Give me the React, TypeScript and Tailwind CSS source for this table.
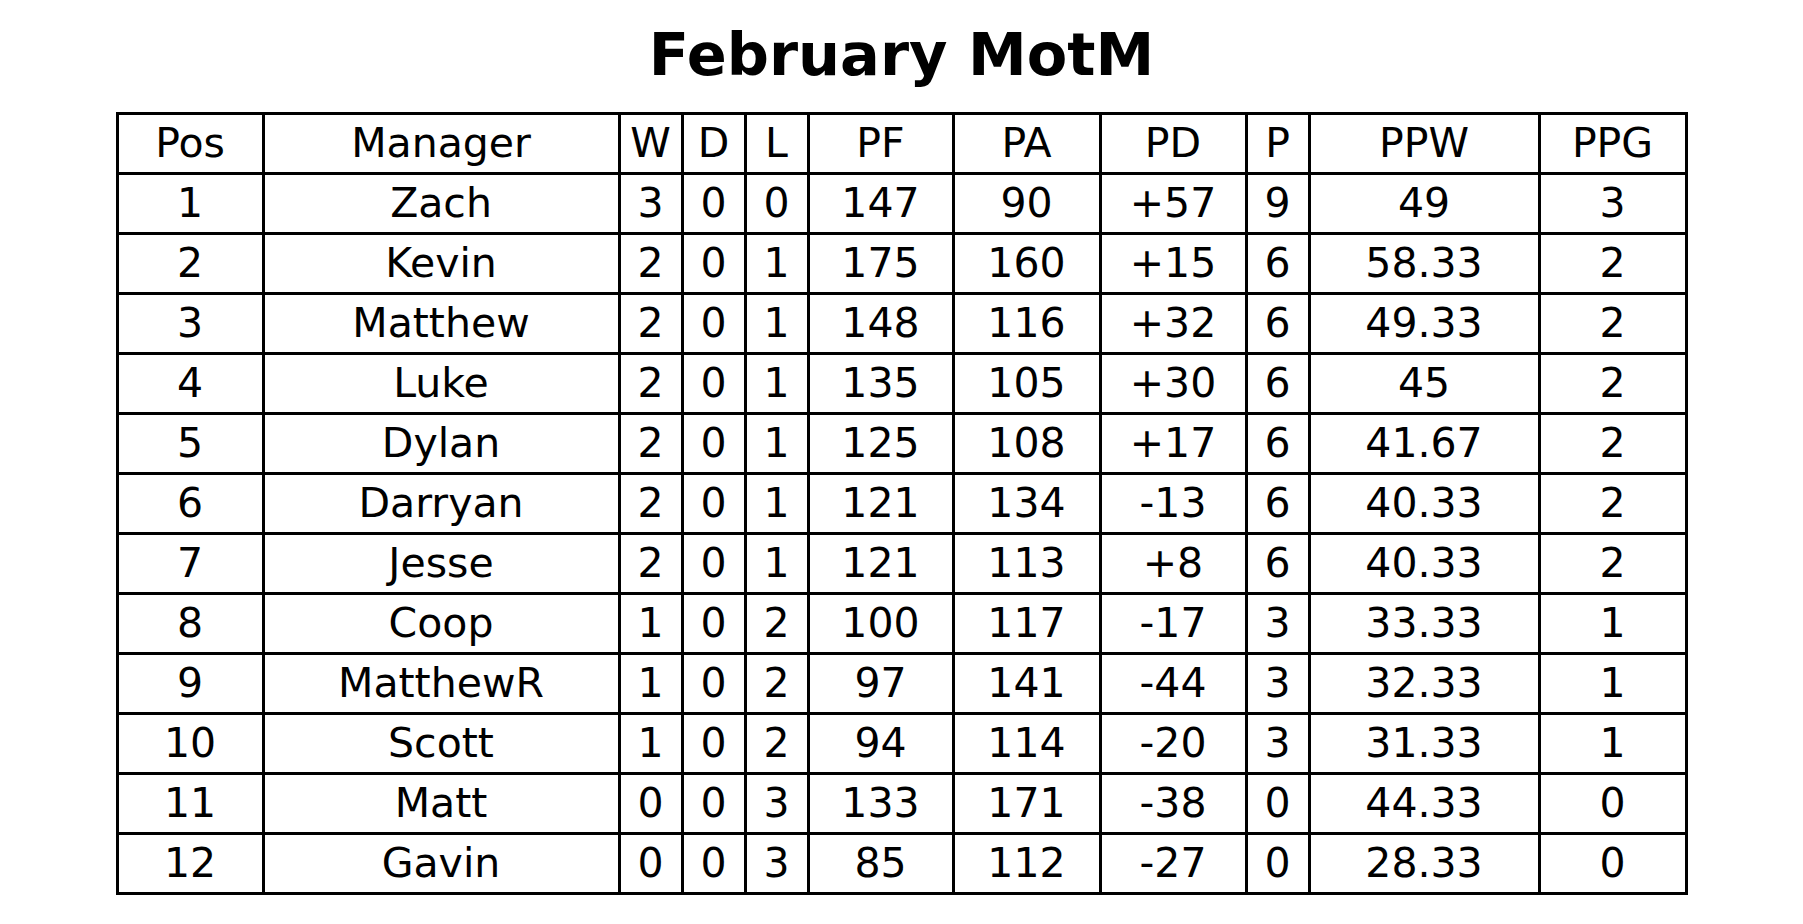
const cols = [
  { h: "Pos", w: "w-[146px]" },
  { h: "Manager", w: "w-[356px]" },
  { h: "W", w: "w-[63px]" },
  { h: "D", w: "w-[63px]" },
  { h: "L", w: "w-[63px]" },
  { h: "PF", w: "w-[145px]" },
  { h: "PA", w: "w-[147px]" },
  { h: "PD", w: "w-[146px]" },
  { h: "P", w: "w-[63px]" },
  { h: "PPW", w: "w-[230px]" },
  { h: "PPG", w: "w-[147px]" },
];

const rows: (string | number)[][] = [
  [1, "Zach", 3, 0, 0, 147, 90, "+57", 9, "49", 3],
  [2, "Kevin", 2, 0, 1, 175, 160, "+15", 6, "58.33", 2],
  [3, "Matthew", 2, 0, 1, 148, 116, "+32", 6, "49.33", 2],
  [4, "Luke", 2, 0, 1, 135, 105, "+30", 6, "45", 2],
  [5, "Dylan", 2, 0, 1, 125, 108, "+17", 6, "41.67", 2],
  [6, "Darryan", 2, 0, 1, 121, 134, "-13", 6, "40.33", 2],
  [7, "Jesse", 2, 0, 1, 121, 113, "+8", 6, "40.33", 2],
  [8, "Coop", 1, 0, 2, 100, 117, "-17", 3, "33.33", 1],
  [9, "MatthewR", 1, 0, 2, 97, 141, "-44", 3, "32.33", 1],
  [10, "Scott", 1, 0, 2, 94, 114, "-20", 3, "31.33", 1],
  [11, "Matt", 0, 0, 3, 133, 171, "-38", 0, "44.33", 0],
  [12, "Gavin", 0, 0, 3, 85, 112, "-27", 0, "28.33", 0],
];

export default function App() {
  return (
    <div className="w-[1803px] h-[924px] bg-white text-black font-['DejaVu_Sans',sans-serif]">
      <h1 className="pt-[21px] text-center text-[59px] leading-[68px] font-bold">February MotM</h1>
      <div className="mt-[23px] flex justify-center">
        <table className="table-fixed border-collapse text-[41px] leading-none">
          <colgroup>
            {cols.map((c) => (
              <col key={c.h} className={c.w} />
            ))}
          </colgroup>
          <thead>
            <tr className="h-[60px]">
              {cols.map((c) => (
                <th key={c.h} className="border-[3px] border-black p-0 pb-px text-center font-normal">
                  {c.h}
                </th>
              ))}
            </tr>
          </thead>
          <tbody>
            {rows.map((r) => (
              <tr key={r[0]} className="h-[60px]">
                {r.map((v, i) => (
                  <td key={i} className="border-[3px] border-black p-0 pb-px text-center">
                    {v}
                  </td>
                ))}
              </tr>
            ))}
          </tbody>
        </table>
      </div>
    </div>
  );
}
